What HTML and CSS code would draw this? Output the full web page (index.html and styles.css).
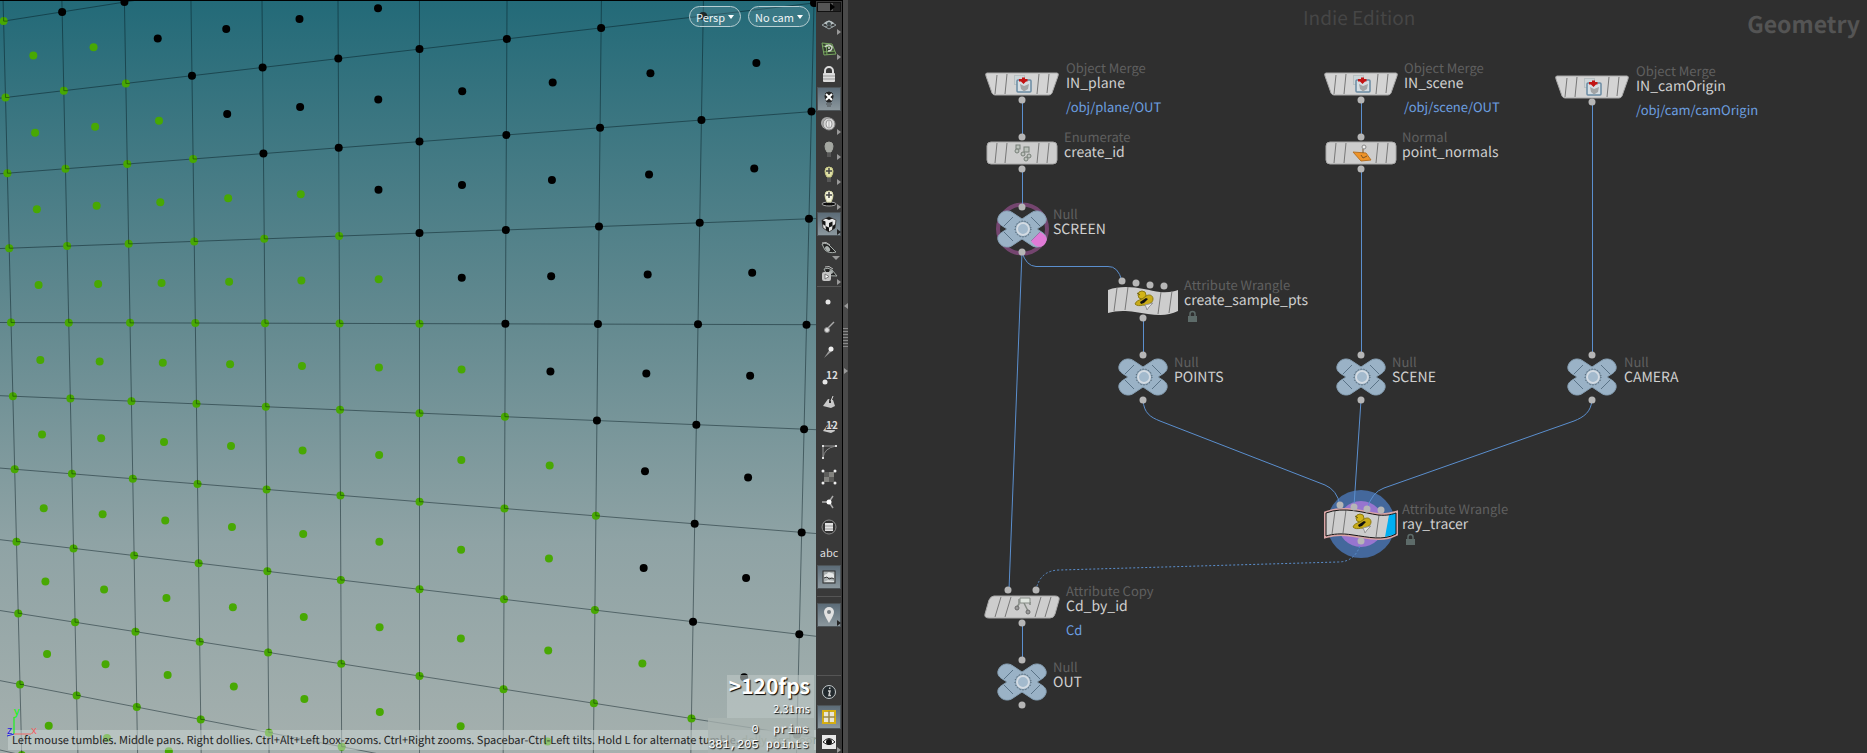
FILE: index.html
```html
<!DOCTYPE html>
<html lang="en">
<head>
<meta charset="utf-8">
<title>Geometry network</title>
<link rel="stylesheet" href="styles.css">
</head>
<body>
<svg class="defs" aria-hidden="true">
  <defs>
    <g id="null-body">
      <g fill="#9ab2c6" stroke="#87a0b4" stroke-width="1">
        <path d="M-24-11C-22-18-14-20-9-16L0-10 9-16C14-20 22-18 24-11 25-7 22-4 18-2L15 0 18 2C22 4 25 7 24 11 22 18 14 20 9 16L0 10-9 16C-14 20-22 18-24 11-25 7-22 4-18 2L-15 0-18-2C-22-4-25-7-24-11Z"/>
      </g>
      <path d="M-18-3-9-12M18-3 9-12M-18 3-9 12M18 3 9 12" stroke="#5a7387" fill="none"/>
      <circle r="8" cx="1" fill="#7e98ac"/>
      <circle r="6" cx="1" fill="#a3bacd" stroke="#d3dbe3" stroke-width="2"/>
      <circle r="8" cx="1" fill="none" stroke="#4b5a67" stroke-width="1" stroke-dasharray="1 2"/>
    </g>
    <g id="merge-body">
      <path d="M-35-11H35Q37-11 36-8L30 9Q29 11 27 11H-27Q-29 11-30 9L-36-8Q-37-11-35-11Z" fill="#d4d4d4" stroke="#a9a9a9" stroke-width="1"/>
      <path d="M-25-9-27 10M-15-10-17 10M17-10 15 10M27-10 25 9" stroke="#777" fill="none"/>
      <rect x="-7.500" y="-8.500" width="10" height="9" fill="#cdd5d8" stroke="#b9c0c2"/>
      <rect x="-5" y="-4" width="14" height="12" rx="1" fill="#d6dee3" stroke="#6a8aa2" stroke-width="1.500"/>
      <path d="M-2 0 2 2 7 0 6 5 2 7.500-1 5Z" fill="#a3a5a6"/>
      <path d="M0-6.500H3V-5H5.500V-2.500H4L1.500 0-1-2.500H-3V-5H0Z" fill="#c21414"/>
    </g>
    <g id="box-body">
      <rect x="-35" y="-11" width="70" height="22" rx="4" fill="#cdcdcd" stroke="#a9a9a9"/>
      <path d="M-25-10-27 10M-15-10-17 10M17-10 15 10M27-10 25 10" stroke="#777" fill="none"/>
    </g>
    <g id="wave-body">
      <path d="M-35-10C-17-17 3-10 17-8 26-7 32-9 35-10V11C22 18 7 14-8 12-20 10-28 11-35 13Z" fill="#cdcdcd"/>
      <path d="M-26-12-29 11M-15-13-18 10M18-8 15 14M29-9 26 13" stroke="#777" fill="none"/>
      <circle cx="-1" cy="-5" r="4" fill="#d2b418" stroke="#8d7b12"/>
      <path d="M-8 4C-7 1-4 0-1-1L3-4C6-6 10-5 10-1 10 3 4 6 0 5-3 6-6 6-8 4Z" fill="#c9ab18" stroke="#8d7b12"/>
      <path d="M-3 2 3-2 5-1 1 3-2 4Z" fill="#111"/>
      <path d="M-6-7-3-5" stroke="#6b5d10"/>
      <path d="M2 5 10 3 6 7 4 10 3 7Z" fill="#e6e6e6" stroke="#999"/>
    </g>
    <g id="padlock">
      <path d="M-2 5V2a2.500 2.500 0 0 1 5 0V5" fill="none" stroke="#5d6b69" stroke-width="1.500"/>
      <rect x="-4" y="4" width="9" height="6" fill="#5d6b69"/>
    </g>
  </defs>
</svg>
<main class="workspace">
  <section class="viewport" aria-label="Scene view">
    <svg class="scene" id="scene" aria-hidden="true"></svg>
    <div class="view-menus">
      <button class="pill" type="button">Persp<span class="caret"></span></button>
      <button class="pill" type="button">No cam<span class="caret"></span></button>
    </div>
    <p class="hint">Left mouse tumbles. Middle pans. Right dollies. Ctrl+Alt+Left box-zooms. Ctrl+Right zooms. Spacebar-Ctrl-Left tilts. Hold L for alternate tumble, <span class="faint">dolly, and zoom.</span></p>
    <svg class="axes" width="40" height="30" aria-hidden="true">
      <path d="M8 25V8" stroke="#0f0" fill="none"/><path d="M8 25H25" stroke="#e66" fill="none"/><path d="M8 25 1 27" stroke="#22d" fill="none"/>
      <text x="8" y="6" fill="#0f0">y</text><text x="25" y="25" fill="#e66">x</text><text x="1" y="25" fill="#22d">z</text>
    </svg>
    <div class="stats">
      <div class="timing"><strong class="fps">&gt;120fps</strong><span class="ms">2.31ms</span></div>
      <pre class="counts">0  prims
381,205 points</pre>
    </div>
  </section>

  <nav class="toolbar" aria-label="Display options">
    <div class="handle"></div>
    <div class="tools">
      <button class="tool more" type="button" aria-label="Construction plane"><svg viewBox="-12 -12 24 24"><path d="M-7 1 0-3 7 1 0 5ZM-4-1 4 3M4-1-4 3" fill="none" stroke="#9aa5a8"/><path d="M-5-1Q0-6 5-1L0 2Z" fill="#b7c0c2"/><circle cy="0" r="2" fill="#3d474a"/></svg></button>
      <button class="tool more" type="button" aria-label="Reference grid"><svg viewBox="-12 -12 24 24"><path d="M-7-6 3-5 7 5-5 6Z" fill="#343d30" stroke="#79a861"/><path d="M-7-3 4-2M-6 3 6 2M-3-6-2 6" stroke="#79a861"/><path d="M-4-2Q0-6 3-2 3 2-1 2M-1-1H1" fill="none" stroke="#cfd6cb" stroke-width="1.500"/></svg></button>
      <button class="tool" type="button" aria-label="Lock camera"><svg viewBox="-12 -12 24 24"><path d="M-4 0V-3a4 4 0 0 1 8 0V0" fill="none" stroke="#ddd" stroke-width="2"/><rect x="-6" y="-1" width="12" height="9" rx="1" fill="#dcdcdc"/><path d="M-6 2H6M-6 5H6" stroke="#999"/></svg></button>
      <button class="tool on" type="button" aria-label="Headlight off"><svg viewBox="-12 -12 24 24"><path d="M-4-3a4 4 0 0 1 8 0Q4 0 2 3H-2Q-4 0-4-3Z" fill="#222" stroke="#222"/><path d="M-3-5 3 1M3-5-3 1" stroke="#fff" stroke-width="2"/><path d="M-3 5H3M-2 7H2" stroke="#5f666a" stroke-width="1.500"/></svg></button>
      <button class="tool more" type="button" aria-label="Shading"><svg viewBox="-12 -12 24 24"><circle cx="-2" cy="-1" r="6" fill="#aaa"/><circle r="6" fill="#d3d3d3" stroke="#888"/><ellipse rx="3" ry="4" fill="#eee" stroke="#999"/><path d="M0-3V3" stroke="#aaa"/></svg></button>
      <button class="tool more" type="button" aria-label="Normal lighting"><svg viewBox="-12 -12 24 24"><path d="M-4-3a4 4 0 0 1 8 0Q4 0 2 3H-2Q-4 0-4-3Z" fill="#a4a7a1" stroke="#a4a7a1"/><path d="M-2 5H2M-2 7H2" stroke="#777"/></svg></button>
      <button class="tool more" type="button" aria-label="High quality lighting"><svg viewBox="-12 -12 24 24"><path d="M-4-3a4 4 0 0 1 8 0Q4 0 2 3H-2Q-4 0-4-3Z" fill="#dfe0a5" stroke="#c6c783"/><path d="M0-6V0M-3-3H3" stroke="#444" stroke-width="1.500"/><path d="M-2 5H2M-2 7H2" stroke="#777"/></svg></button>
      <button class="tool more" type="button" aria-label="Shadows"><svg viewBox="-12 -12 24 24"><ellipse cy="5" rx="7" ry="2" fill="#0c0c0c" stroke="#aaa"/><path d="M-4-4a4 4 0 0 1 8 0Q4-1 2 3H-2Q-4-1-4-4Z" fill="#f3f3df" stroke="#d6d7a6"/><path d="M0-7V-1M-3-4H3" stroke="#444" stroke-width="1.500"/></svg></button>
      <button class="tool on more" type="button" aria-label="Materials"><svg viewBox="-12 -12 24 24"><path d="M-7-4 0-7 7-4 6 4 0 8-6 4Z" fill="#e8e8e8" stroke="#444"/><path d="M-7-4-3.500-2.500V2L-6.500 0ZM-3.500 2 0 3.500V8L-3 6ZM0-1 3.500-2.500V2L0 3.500ZM3.500 2 6.500 0 6 4 3 6ZM-3.500-5.500 0-7 3.500-5.500 0-4Z" fill="#151515"/></svg></button>
      <button class="tool below" type="button" aria-label="Ghost objects"><svg viewBox="-12 -12 24 24"><path d="M-7-5Q-2-7 2-2L7 3Q0 5-4 1Z" fill="#222" stroke="#a9b0ac"/><path d="M-7-6Q-3-8 1-4" stroke="#bbb" fill="none"/><ellipse cx="-1" cy="-1" rx="2" ry="3" fill="#aab0ae" transform="rotate(-40)"/></svg></button>
      <button class="tool more" type="button" aria-label="Flipbook"><svg viewBox="-12 -12 24 24"><path d="M-5-5Q-1-7 3-4L8 2Q2 3-3-1Z" fill="#222" stroke="#a9b0ac"/><path d="M-4-7Q0-9 4-5" stroke="#bbb" fill="none"/><circle cx="2" cy="-2" r="2" fill="#aab0ae"/><rect x="-7" y="-2" width="9" height="9" rx="2" fill="#c4c4c4"/><path d="M-4 0 0 2.500-4 5Z" fill="#fff" stroke="#777"/></svg></button>
    </div>
    <hr class="rule">
    <div class="tools">
      <button class="tool" type="button" aria-label="Points"><svg viewBox="-12 -12 24 24"><circle cx="-1" r="2.500" fill="#e6e6e6"/></svg></button>
      <button class="tool" type="button" aria-label="Point normals"><svg viewBox="-12 -12 24 24"><path d="M-3 3 5-5" stroke="#aaa" stroke-width="1.500"/><circle cx="-2" cy="3" r="2.500" fill="#ddd" stroke="#888"/></svg></button>
      <button class="tool" type="button" aria-label="Point trails"><svg viewBox="-12 -12 24 24"><path d="M-5 6 1-3 3-1Z" fill="#999"/><circle cx="2" cy="-3" r="2.500" fill="#eee"/></svg></button>
      <button class="tool" type="button" aria-label="Point numbers"><svg viewBox="-12 -12 24 24"><text class="num" x="-3" y="2">12</text><circle cx="-4" cy="5" r="2.500" fill="#e6e6e6"/></svg></button>
      <button class="tool" type="button" aria-label="Primitive normals"><svg viewBox="-12 -12 24 24"><path d="M-6 4-1-3 4-2 6 4 2 6Z" fill="#c9c9c9"/><path d="M1 1V-1L3-6" stroke="#333" stroke-width="2" fill="none"/><path d="M2-1 4-6" stroke="#ddd"/></svg></button>
      <button class="tool" type="button" aria-label="Primitive numbers"><svg viewBox="-12 -12 24 24"><path d="M-6 4-1-3 4-2 6 4 2 6Z" fill="#c9c9c9"/><text class="num outlined" x="-3" y="2">12</text></svg></button>
      <button class="tool" type="button" aria-label="Hulls"><svg viewBox="-12 -12 24 24"><path d="M-6 6V-6H7" fill="none" stroke="#999"/><path d="M-6 6Q-5-4 7-6" fill="none" stroke="#888"/><path d="M-7 5h2v2h-2zM-7-7h2v2h-2zM6-7h2v2h-2z" fill="#ddd"/></svg></button>
      <button class="tool" type="button" aria-label="Vertices"><svg viewBox="-12 -12 24 24"><rect x="-5" y="-5" width="10" height="10" fill="#5c5c5a"/><path d="M-5 0H0V5H-5ZM0-5H5V0H0Z" fill="#83837f"/><g fill="#eee"><circle cx="-6" cy="-6" r="1.500"/><circle cx="6" cy="-6" r="1.500"/><circle cx="-6" cy="6" r="1.500"/><circle cx="6" cy="6" r="1.500"/></g></svg></button>
      <button class="tool" type="button" aria-label="Vertex normals"><svg viewBox="-12 -12 24 24"><path d="M-7 0H0L4-6M0 0 4 6" fill="none" stroke="#aaa" stroke-width="1.500"/><circle r="2.500" fill="#fff"/></svg></button>
      <button class="tool" type="button" aria-label="Visualizers"><svg viewBox="-12 -12 24 24"><circle r="7" fill="#333" stroke="#8b8b8b"/><rect x="-4" y="-4" width="8" height="8" fill="#e3e3e3"/><path d="M-4-1H4M-4 2H4" stroke="#999"/></svg></button>
      <button class="tool abc" type="button">abc</button>
      <button class="tool on" type="button" aria-label="Background image"><svg viewBox="-12 -12 24 24"><rect x="-6" y="-6" width="12" height="12" fill="#a9afb0" stroke="#2d2d2d"/><path d="M-5 0Q-5-3-2-3-1-6 2-4 5-4 5-1L5 1-1 0Z" fill="#e6e8e8"/><path d="M-5 1-2 0 0 2 3 1 5 2" fill="none" stroke="#3c3c3c"/><path d="M-5 5-1 3 5 4V5Z" fill="#d9dcdc"/></svg></button>
    </div>
    <hr class="rule spaced">
    <div class="tools">
      <button class="tool on more" type="button" aria-label="Markers"><svg viewBox="-12 -12 24 24"><path d="M0 8Q-5 0-5-3a5 5 0 0 1 10 0Q5 0 0 8Z" fill="#e1e1e1"/><circle cy="-3" r="2" fill="#747d82"/></svg></button>
    </div>
    <div class="tools last">
      <hr class="rule">
      <button class="tool" type="button" aria-label="Info"><svg viewBox="-12 -12 24 24"><circle r="6.500" fill="#22292d" stroke="#c4cbcd"/><path d="M1-4.500 0.500-3M-1-1H1L0 3.500H2" stroke="#ccc" stroke-width="1.500" fill="none"/></svg></button>
      <button class="tool on" type="button" aria-label="View layout"><svg viewBox="-12 -12 24 24"><rect x="-6" y="-6" width="12" height="12" fill="#e9e6d6" stroke="#d5ae12" stroke-width="2"/><path d="M0-6V6M-6 0H6" stroke="#9a8a4a" stroke-width="1.500"/></svg></button>
      <button class="tool more" type="button" aria-label="Visibility"><svg viewBox="-12 -12 24 24"><rect x="-7" y="-7" width="14" height="14" fill="#e8e8e8"/><path d="M-6 0Q0-7 6 0 0 5-6 0Z" fill="#fff" stroke="#222"/><circle r="3" fill="#111"/></svg></button>
    </div>
  </nav>

  <div class="splitter" aria-hidden="true"><span class="tip left"></span><span class="grip"></span><span class="tip right"></span></div>

  <section class="network" aria-label="Network editor">
    <div class="watermark">Indie Edition</div>
    <h1 class="context">Geometry</h1>
    <svg class="graph" aria-hidden="true">
      <g transform="translate(-848)">
        <circle cx="1361" cy="524" r="34" fill="#44689c"/>
        <circle cx="1361" cy="524" r="23" fill="#9775cf"/>
        <circle cx="1022.500" cy="229" r="24.500" fill="none" stroke="#74456f" stroke-width="4"/>
        <g class="wires">
          <path d="M1022.500 100V137M1022.500 169V207M1143.500 317V355M1361.500 100V137M1361.500 169V355M1592.500 102V355M1022.500 623V660"/>
          <path d="M1022 252 1009 590"/>
          <path d="M1022 252Q1026 266 1036 266.500H1108Q1118 266 1122 281"/>
          <path d="M1143 400C1144 413 1150 417 1160 421L1325 485Q1337 490 1340 505"/>
          <path d="M1361 400 1354 506"/>
          <path d="M1592 400C1591 412 1584 417 1574 421L1384 488Q1372 492 1367 509"/>
          <path class="dotted" d="M1361 542Q1356 562 1338 562L1060 570Q1040 570 1036 590"/>
        </g>
        <use href="#merge-body" x="1022" y="84"/>
        <use href="#merge-body" x="1361" y="84"/>
        <use href="#merge-body" x="1592" y="87"/>
        <use href="#box-body" x="1022" y="153"/>
        <g fill="#bcc2bc" stroke="#777f78"><rect x="1016" y="145" width="4" height="4"/><rect x="1024" y="147" width="5" height="5"/><circle cx="1017" cy="151" r="2"/><circle cx="1023" cy="154" r="2"/><circle cx="1029" cy="156" r="2"/><circle cx="1026" cy="159" r="2"/></g>
        <use href="#box-body" x="1361" y="153"/>
        <path d="M1353 152 1366 153 1371 160 1361 161Z" fill="#ee9328" stroke="#b87224"/><path d="M1361 155 1363 158 1367 156M1363 153V149" stroke="#7c5527" fill="none"/><circle cx="1364" cy="147" r="2" fill="#eee" stroke="#888"/>
        <use href="#null-body" x="1022" y="229"/>
        <path d="M1031 241 1040 232C1046 235 1048 239 1046 242 1044 248 1036 249 1031 241Z" fill="#e07ad6"/>
        <use href="#wave-body" x="1143" y="300"/>
        <use href="#null-body" x="1143" y="377"/>
        <use href="#null-body" x="1361" y="377"/>
        <use href="#null-body" x="1592" y="377"/>
        <path d="M1326 513C1344 506 1364 513 1378 515 1387 516 1393 514 1396 513V534C1383 541 1368 537 1353 535 1341 533 1333 534 1326 536Z" fill="#cdcdcd" stroke="#d9a5a5" stroke-width="4"/>
        <use href="#wave-body" x="1361" y="523"/>
        <path d="M1389 515 1396 513V534L1385 537Z" fill="#00aef2"/>
        <path d="M1326 513C1344 506 1364 513 1378 515 1387 516 1393 514 1396 513V534C1383 541 1368 537 1353 535 1341 533 1333 534 1326 536Z" fill="none" stroke="#151515" stroke-width="1"/>
        <path d="M994 596H1055Q1060 596 1059 600L1055 614Q1054 618 1050 618H989Q984 618 985 614L989 600Q991 596 994 596Z" fill="#cdcdcd" stroke="#a9a9a9"/>
        <path d="M1001 597 995 617M1011 597 1005 617M1041 597 1035 617M1051 597 1045 617" stroke="#777"/>
        <path d="M1019 599V604L1017 607M1024 603 1028 611M1030 602V605" fill="none" stroke="#858b85" stroke-width="1.500"/><path d="M1020 598H1030V603H1020Z" fill="#dfe5df" stroke="#858b85"/><circle cx="1017" cy="608" r="2" fill="#999" stroke="#6c6c6c"/><circle cx="1028" cy="612" r="2" fill="#999" stroke="#6c6c6c"/>
        <use href="#null-body" x="1022" y="682"/>
        <g class="ports" id="ports"></g>
        <use href="#padlock" x="1192" y="312"/>
        <use href="#padlock" x="1410" y="535"/>
      </g>
    </svg>
    <div class="label n-plane"><span class="kind">Object Merge</span><span class="name">IN_plane</span><a class="path" href="#plane">/obj/plane/OUT</a></div>
    <div class="label n-id"><span class="kind">Enumerate</span><span class="name">create_id</span></div>
    <div class="label n-screen"><span class="kind">Null</span><span class="name">SCREEN</span></div>
    <div class="label n-sample"><span class="kind">Attribute Wrangle</span><span class="name">create_sample_pts</span></div>
    <div class="label n-points"><span class="kind">Null</span><span class="name">POINTS</span></div>
    <div class="label n-inscene"><span class="kind">Object Merge</span><span class="name">IN_scene</span><a class="path" href="#scene">/obj/scene/OUT</a></div>
    <div class="label n-normals"><span class="kind">Normal</span><span class="name">point_normals</span></div>
    <div class="label n-scene"><span class="kind">Null</span><span class="name">SCENE</span></div>
    <div class="label n-origin"><span class="kind">Object Merge</span><span class="name">IN_camOrigin</span><a class="path" href="#cam">/obj/cam/camOrigin</a></div>
    <div class="label n-camera"><span class="kind">Null</span><span class="name">CAMERA</span></div>
    <div class="label n-tracer"><span class="kind">Attribute Wrangle</span><span class="name">ray_tracer</span></div>
    <div class="label n-copy"><span class="kind">Attribute Copy</span><span class="name">Cd_by_id</span><a class="path" href="#cd">Cd</a></div>
    <div class="label n-out"><span class="kind">Null</span><span class="name">OUT</span></div>
  </section>
</main>
<script src="scene.js"></script>
</body>
</html>
```
FILE: styles.css
```css
* { box-sizing: border-box; }
body {
  margin: 0;
  background: #2f2f2f;
  font-family: "Noto Sans CJK SC", "Noto Sans", sans-serif;
  text-rendering: geometricPrecision;
}
button { font: inherit; color: inherit; }
.defs { position: absolute; width: 0; height: 0; }
.workspace {
  display: grid;
  grid-template-columns: minmax(0, 816fr) 26px 6px minmax(0, 1019fr);
  height: 100vh;
}

/* 3D view */
.viewport {
  position: relative;
  overflow: hidden;
  border-top: 1px solid #000;
  background: linear-gradient(#236a78, #648a90 43%, #8fa3a5 72%, #a5b0ae);
}
.scene { position: absolute; inset: -1px 0 0; width: 100%; height: 100%; overflow: visible; }
.scene .edge { fill: none; stroke: #00141a; stroke-opacity: 0.45; stroke-width: 1; }
.scene .tick { fill: none; stroke: #1b4a08; stroke-opacity: 0.7; stroke-width: 1; }
.scene .hit { fill: #48a803; }
.scene .miss { fill: #000; }
.axes {
  position: absolute;
  left: 6px;
  bottom: 14px;
  overflow: visible;
  font-family: "Noto Sans", sans-serif;
  font-size: 11px;
}
.view-menus {
  position: absolute;
  top: 5px;
  right: 6px;
  display: flex;
  gap: 7px;
}
.pill {
  display: flex;
  align-items: center;
  gap: 3px;
  height: 21px;
  padding: 0 6px;
  border: 1px solid #b9cfd3;
  border-radius: 11px;
  background: rgba(120, 160, 170, 0.25);
  color: #eef4f5;
  font-size: 11px;
  line-height: 18px;
}
.caret { border: 3px solid transparent; border-top: 4px solid #fff; border-bottom: 0; }
.hint {
  position: absolute;
  left: 8px;
  right: 0;
  bottom: 3px;
  margin: 0;
  padding-left: 4px;
  overflow: hidden;
  background: rgba(205, 215, 213, 0.5);
  color: #222;
  font-size: 11px;
  line-height: 20px;
  white-space: nowrap;
}
.faint { color: #8a9884; }
.stats {
  position: absolute;
  right: 2px;
  bottom: 0;
  display: flex;
  flex-direction: column;
  align-items: flex-end;
  color: #fff;
  text-shadow: 1px 1px 1px #000;
}
.timing {
  display: flex;
  flex-direction: column;
  align-items: flex-end;
  width: 87px;
  height: 43px;
  padding-right: 4px;
  background: rgba(190, 200, 198, 0.6);
}
.fps { font-size: 21px; line-height: 22px; }
.ms { font-size: 11px; line-height: 24px; }
.counts {
  width: 106px;
  margin: 0;
  padding: 5px 5px 0 0;
  background: rgba(170, 180, 178, 0.75);
  font-family: "Liberation Mono", monospace;
  font-size: 12px;
  line-height: 15px;
  text-align: right;
}

/* Display options */
.toolbar {
  display: flex;
  flex-direction: column;
  overflow: hidden;
  border-top: 1px solid #000;
  background: #393939;
  color: #ddd;
}
.handle {
  flex: none;
  height: 10px;
  margin: 1px 1px 0;
  border: 1px solid #111;
  background: linear-gradient(90deg, #555 70%, #222 70%);
}
.handle::after {
  content: "";
  display: block;
  width: 5px;
  margin-left: auto;
  border: 4px solid transparent;
  border-left: 5px solid #000;
  border-right: 0;
}
.tools { display: flex; flex-direction: column; align-items: center; gap: 1px; }
.tool {
  position: relative;
  flex: none;
  width: 24px;
  height: 24px;
  padding: 0;
  border: 1px solid transparent;
  background: none;
}
.tool svg { display: block; width: 24px; height: 24px; margin: -1px; }
.tool.on { border-color: #4d5458; background: linear-gradient(#5c6c78, #8b979d); }
.tool.more::after {
  content: "";
  position: absolute;
  right: -1px;
  bottom: 0;
  border: 3px solid transparent;
  border-left: 4px solid #999;
  border-right: 0;
}
.tool.on.more::after { border-left-color: #222; }
.tool.below::after {
  content: "";
  position: absolute;
  right: 0;
  bottom: 0;
  border: 4px solid transparent;
  border-top-color: #999;
  border-bottom: 0;
}
.tool.abc { font-size: 11px; line-height: 20px; }
.num { fill: #ddd; font-size: 10px; font-weight: 700; }
.outlined { stroke: #393939; stroke-width: 2px; paint-order: stroke; }
.rule {
  flex: none;
  width: 24px;
  height: 1px;
  margin: 0 1px 3px;
  border: 0;
  background: #555;
}
.rule.spaced { margin: 7px 1px 6px; }
.last { margin-top: auto; margin-bottom: -1px; }
.splitter {
  display: flex;
  flex-direction: column;
  align-items: center;
  justify-content: center;
  gap: 19px;
  padding-bottom: 77px;
  border-left: 1px solid #000;
  background: #4a4a4a;
}
.grip {
  width: 5px;
  height: 21px;
  background: repeating-linear-gradient(#888 0 1px, transparent 1px 3px);
}
.tip { border: 3px solid transparent; }
.tip.left { border-right: 4px solid #999; border-left: 0; }
.tip.right { border-left: 4px solid #999; border-right: 0; }

/* Node network */
.network { position: relative; overflow: hidden; background: #2f2f2f; }
.watermark {
  position: absolute;
  top: 4px;
  left: 455px;
  color: #464646;
  font-size: 19px;
  line-height: 28px;
}
.context {
  position: absolute;
  top: 8px;
  right: 7px;
  margin: 0;
  color: #545454;
  font-size: 23px;
  font-weight: 700;
  line-height: 30px;
}
.graph { position: absolute; inset: 0; width: 100%; height: 100%; }
.wires { fill: none; stroke: #5b8fce; stroke-width: 1; }
.dotted { stroke-dasharray: 2 2; }
.ports { fill: #b6b6b6; }
.label {
  position: absolute;
  display: flex;
  flex-direction: column;
  color: #cfcfcf;
  font-size: 14px;
  line-height: 16px;
  white-space: nowrap;
}
.kind { color: #606060; font-size: 13px; line-height: 15px; }
.path { margin-top: 8px; color: #6c9fe0; font-size: 13px; text-decoration: none; }
.n-plane { left: 218px; top: 60px; }
.n-id { left: 216px; top: 129px; }
.n-screen { left: 205px; top: 206px; }
.n-sample { left: 336px; top: 277px; }
.n-points { left: 326px; top: 354px; }
.n-inscene { left: 556px; top: 60px; }
.n-normals { left: 554px; top: 129px; }
.n-scene { left: 544px; top: 354px; }
.n-origin { left: 788px; top: 63px; }
.n-camera { left: 776px; top: 354px; }
.n-tracer { left: 554px; top: 501px; }
.n-copy { left: 218px; top: 583px; }
.n-out { left: 205px; top: 659px; }
```
FILE: scene.js
```js
const SVG = "http://www.w3.org/2000/svg";

function add(parent, tag, attrs) {
  const el = document.createElementNS(SVG, tag);
  for (const key in attrs) el.setAttribute(key, attrs[key]);
  parent.appendChild(el);
}

// Perspective transform taking four grid corners to four screen points.
function homography(pairs) {
  const m = [];
  for (const [[i, j], [x, y]] of pairs) {
    m.push([i, j, 1, 0, 0, 0, -i * x, -j * x, x]);
    m.push([0, 0, 0, i, j, 1, -i * y, -j * y, y]);
  }
  for (let c = 0; c < 8; c++) {
    let p = c;
    for (let r = c; r < 8; r++) if (Math.abs(m[r][c]) > Math.abs(m[p][c])) p = r;
    [m[c], m[p]] = [m[p], m[c]];
    for (let r = 0; r < 8; r++) {
      if (r === c) continue;
      const f = m[r][c] / m[c][c];
      for (let k = c; k < 9; k++) m[r][k] -= f * m[c][k];
    }
  }
  const h = m.map((row, n) => row[8] / row[n]);
  return (i, j) => {
    const w = h[6] * i + h[7] * j + 1;
    return [(h[0] * i + h[1] * j + h[2]) / w, (h[3] * i + h[4] * j + h[5]) / w];
  };
}

const project = homography([
  [[0, 1], [5.5, 97.5]],
  [[10, 1], [814, 3]],
  [[10, 7], [799.3, 634.3]],
  [[0, 9], [20, 684.5]],
]);
const scene = document.getElementById("scene");
const line = (a, b) => add(scene, "path", { class: "edge", d: `M${a}L${b}` });
for (let n = -1; n <= 11; n++) {
  line(project(n, -1), project(n, 11));
  line(project(-1, n), project(11, n));
}

// Last column hit by a ray, for each row of corners and each row of cell centres.
const cornerHits = [0, 2, 3, 5, 6, 7, 8, 8, 9, 10, 10];
const centreHits = [1, 2, 4, 5, 6, 7, 7, 8, 8, 10, 10];
for (let j = 0; j <= 10; j++) {
  for (let i = 0; i <= 10; i++) {
    const [x, y] = project(i, j);
    const hit = i <= cornerHits[j];
    add(scene, "circle", { class: hit ? "hit" : "miss", cx: x, cy: y, r: 4 });
    if (hit) add(scene, "path", { class: "tick", d: `M${x} ${y - 4}V${y}H${x + 4}` });
    const [u, v] = project(i + 0.5, j + 0.5);
    add(scene, "circle", { class: i <= centreHits[j] ? "hit" : "miss", cx: u, cy: v, r: 4 });
  }
}

const ports = document.getElementById("ports");
[
  [1022, 100], [1022, 137], [1022, 169], [1022, 207], [1022, 252],
  [1122, 281], [1136, 283], [1150, 285], [1164, 286], [1143, 318], [1143, 355], [1143, 400],
  [1361, 100], [1361, 137], [1361, 169], [1361, 355], [1361, 400],
  [1592, 102], [1592, 355], [1592, 400],
  [1340, 505], [1354, 507], [1367, 509], [1381, 510], [1361, 541],
  [1008, 590], [1036, 590], [1022, 623], [1022, 660], [1022, 705],
].forEach(([cx, cy]) => add(ports, "circle", { cx, cy, r: 3.5 }));
```
